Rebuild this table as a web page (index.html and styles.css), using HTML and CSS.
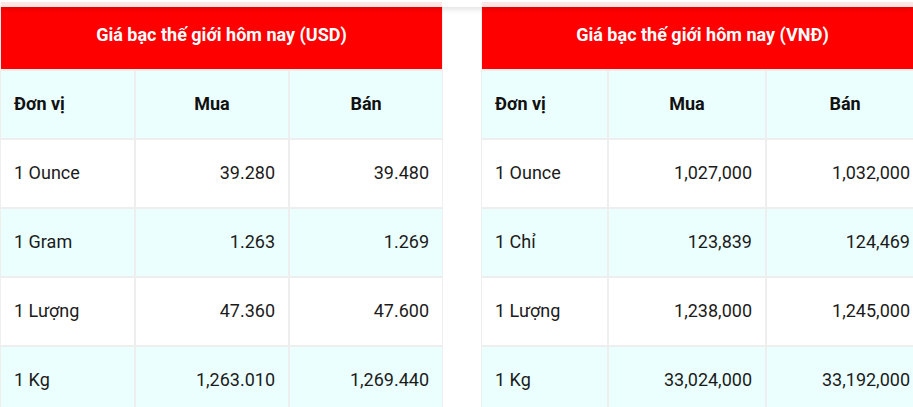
FILE: index.html
```html
<!DOCTYPE html>
<html lang="vi">
<head>
<meta charset="utf-8">
<title>Giá bạc thế giới hôm nay</title>
<link rel="stylesheet" href="styles.css">
</head>
<body>
<div class="topbar"></div>
<div class="wrap">
  <table class="price usd">
    <thead>
      <tr><th class="title" colspan="3">Giá bạc thế giới hôm nay (USD)</th></tr>
      <tr class="head">
        <th class="unit c1">Đơn vị</th>
        <th class="c2">Mua</th>
        <th class="c3">Bán</th>
      </tr>
    </thead>
    <tbody>
      <tr><td class="unit">1 Ounce</td><td class="num">39.280</td><td class="num">39.480</td></tr>
      <tr class="alt"><td class="unit">1 Gram</td><td class="num">1.263</td><td class="num">1.269</td></tr>
      <tr><td class="unit">1 Lượng</td><td class="num">47.360</td><td class="num">47.600</td></tr>
      <tr class="alt"><td class="unit">1 Kg</td><td class="num">1,263.010</td><td class="num">1,269.440</td></tr>
    </tbody>
  </table>
  <table class="price vnd">
    <thead>
      <tr><th class="title" colspan="3">Giá bạc thế giới hôm nay (VNĐ)</th></tr>
      <tr class="head">
        <th class="unit c1">Đơn vị</th>
        <th class="c2">Mua</th>
        <th class="c3">Bán</th>
      </tr>
    </thead>
    <tbody>
      <tr><td class="unit">1 Ounce</td><td class="num">1,027,000</td><td class="num">1,032,000</td></tr>
      <tr class="alt"><td class="unit">1 Chỉ</td><td class="num">123,839</td><td class="num">124,469</td></tr>
      <tr><td class="unit">1 Lượng</td><td class="num">1,238,000</td><td class="num">1,245,000</td></tr>
      <tr class="alt"><td class="unit">1 Kg</td><td class="num">33,024,000</td><td class="num">33,192,000</td></tr>
    </tbody>
  </table>
</div>
</body>
</html>
```
FILE: styles.css
```css
html, body {
  margin: 0;
  padding: 0;
  overflow: hidden;
  background: #ffffff;
}

body {
  font-family: Roboto, "Liberation Sans", sans-serif;
  color: #1b1b1b;
}

.topbar {
  position: fixed;
  top: 0;
  left: 0;
  right: 0;
  height: 5px;
  border-top: 2px solid #ffffff;
  background: rgba(255, 255, 255, 0.9);
  box-shadow: 0 2px 6px rgba(0, 0, 0, 0.13);
  z-index: 5;
}

.wrap {
  display: flex;
  gap: 38px;
  width: 924px;
}

.price {
  flex: none;
  width: 443px;
  border-collapse: separate;
  border-spacing: 0;
  font-size: 18px;
}

.price th,
.price td {
  box-sizing: border-box;
  height: 69px;
  padding: 0 13px 3px;
  border-right: 2px solid #eeeeee;
  border-bottom: 2px solid #eeeeee;
  vertical-align: middle;
}

.price tr > :first-child {
  border-left: 1px solid #eeeeee;
}

.price tr > :last-child {
  border-right: 1px solid #eeeeee;
}

.price .title {
  height: 71px;
  padding: 0 13px 1px;
  background: #ff0000;
  color: #ffffff;
  font-size: 18px;
  font-weight: 700;
  text-align: center;
}

.price .head th {
  padding-bottom: 2px;
  background: #ebffff;
  font-weight: 700;
  text-align: center;
  color: #111111;
}

.price .head th.unit {
  text-align: left;
}

.price td {
  background: #ffffff;
  font-weight: 400;
}

.price tr.alt td {
  background: #ebffff;
}

.price td.unit {
  text-align: left;
}

.price td.num {
  text-align: right;
}

.usd .c1 { width: 136px; }
.usd .c2 { width: 154px; }
.usd .c3 { width: 153px; }

.vnd .c1 { width: 128px; }
.vnd .c2 { width: 158px; }
.vnd .c3 { width: 157px; }
```
